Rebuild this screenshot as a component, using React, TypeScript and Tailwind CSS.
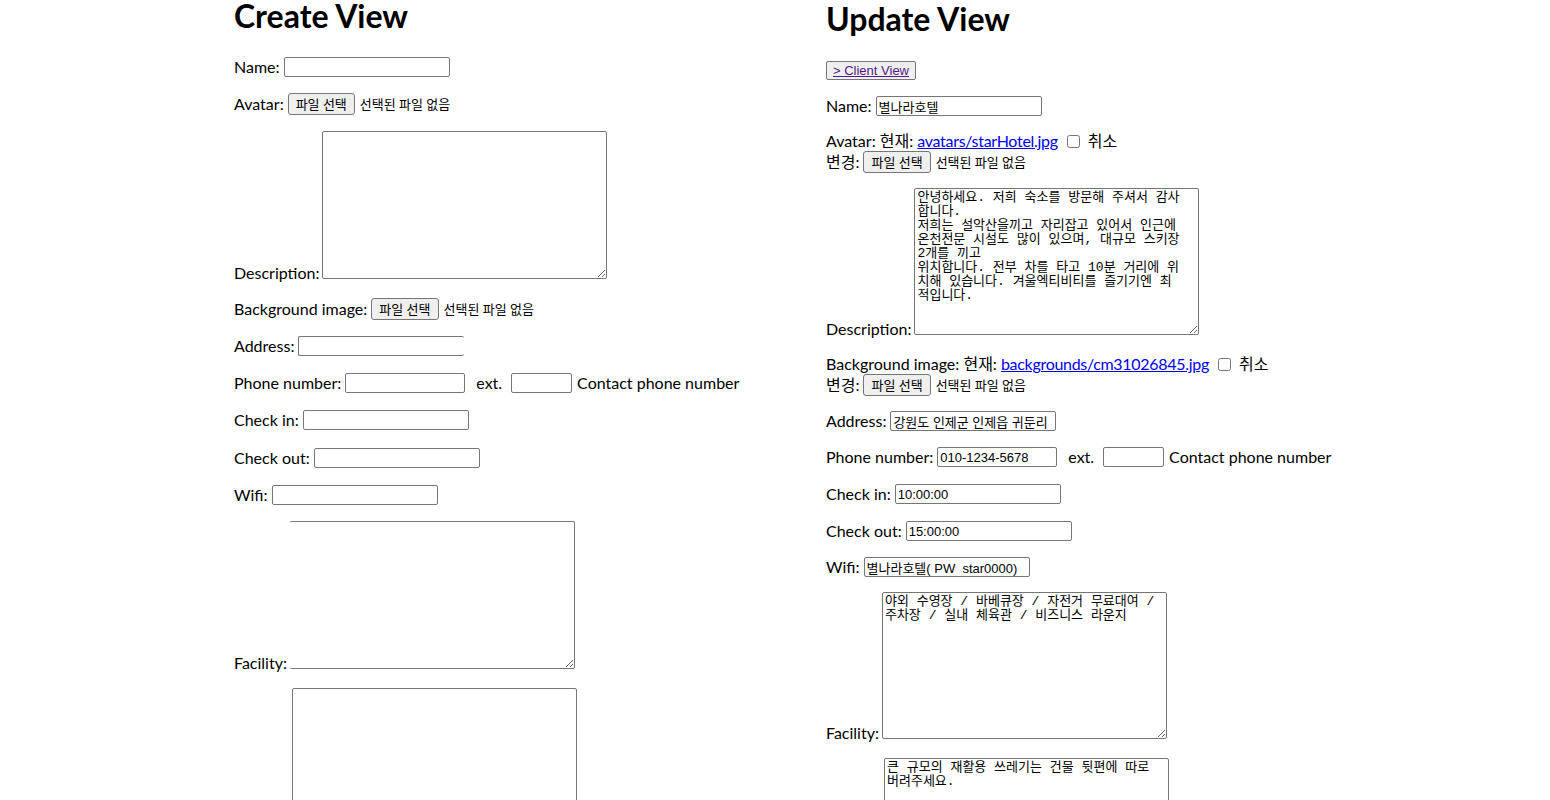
import React from 'react';

const label = "text-[16px] leading-[20px] text-black";
const field =
  "h-[20px] border border-[#767676] rounded-[2px] bg-white px-[2px] text-[13px] leading-[16px] text-black font-['Liberation_Sans','Noto_Sans_CJK_KR',sans-serif] outline-none";
const area =
  "w-[285px] border border-[#767676] rounded-[2px] bg-white px-[2px] py-[2px] text-[13px] leading-[14px] text-black font-['Liberation_Mono','Noto_Sans_CJK_KR',monospace] resize-y outline-none whitespace-pre overflow-hidden";

function FileBtn() {
  return (
    <span className="inline-flex items-center gap-[5px]">
      <button className="h-[22px] px-[7px] border border-[#767676] rounded-[3px] bg-[#efefef] text-[13px] leading-[16px] text-black">
        파일 선택
      </button>
      <span className="text-[13px] leading-[16px] text-black">선택된 파일 없음</span>
    </span>
  );
}

function Field({ name, w = 'w-[166px]', value = '', extra = '', inputExtra = '' }: { name: string; w?: string; value?: string; extra?: string; inputExtra?: string }) {
  return (
    <div className={`flex items-center gap-[4px] ${extra}`}>
      <span className={label}>{name}:</span>
      <input className={`${field} ${w} ${inputExtra}`} defaultValue={value} />
    </div>
  );
}

function Phone({ value = '', extra = '' }: { value?: string; extra?: string }) {
  return (
    <div className={`flex items-center ${extra}`}>
      <span className={label}>Phone number:</span>
      <input className={`${field} w-[120px] ml-[4px]`} defaultValue={value} />
      <span className={`${label} ml-[11px]`}>ext.</span>
      <input className={`${field} w-[61px] ml-[9px]`} />
      <span className={`${label} ml-[5px]`}>Contact phone number</span>
    </div>
  );
}

function AreaRow({ name, h, value = '', extra = '', areaExtra = '' }: { name: string; h: string; value?: string; extra?: string; areaExtra?: string }) {
  return (
    <div className={`flex items-end gap-[3px] ${extra}`}>
      {name ? <span className={`${label} mb-[-4px]`}>{name}:</span> : null}
      <textarea className={`${area} ${h} ${areaExtra}`} defaultValue={value} wrap="off" />
    </div>
  );
}

const desc = `안녕하세요. 저희 숙소를 방문해 주셔서 감사
합니다.
저희는 설악산을끼고 자리잡고 있어서 인근에
온천전문 시설도 많이 있으며, 대규모 스키장
2개를 끼고
위치합니다. 전부 차를 타고 10분 거리에 위
치해 있습니다. 겨울엑티비티를 즐기기엔 최
적입니다.`;

const facility = `야외 수영장 / 바베큐장 / 자전거 무료대여 /
주차장 / 실내 체육관 / 비즈니스 라운지`;

const notice = `큰 규모의 재활용 쓰레기는 건물 뒷편에 따로
버려주세요.`;

function CreateView() {
  return (
    <div className="w-[592px] flex flex-col">
      <h1 className="text-[32px] leading-[37px] font-bold mt-[-3px]">Create View</h1>
      <Field name="Name" extra="mt-[23px]" />
      <div className="flex items-center gap-[4px] mt-[16px]">
        <span className={label}>Avatar:</span>
        <FileBtn />
      </div>
      <AreaRow name="Description" h="h-[148px]" extra="mt-[16px]" />
      <div className="flex items-center gap-[4px] mt-[19px]">
        <span className={label}>Background image:</span>
        <FileBtn />
      </div>
      <Field name="Address" extra="mt-[16px]" inputExtra="border-r-0" />
      <Phone extra="mt-[17px]" />
      <Field name="Check in" extra="mt-[17px]" />
      <Field name="Check out" extra="mt-[18px]" />
      <Field name="Wifi" extra="mt-[17px]" />
      <AreaRow name="Facility" h="h-[148px]" extra="mt-[16px]" areaExtra="border-l-0" />
      <div className="mt-[19px] pl-[58px]">
        <textarea className={`${area} h-[148px]`} wrap="off" />
      </div>
    </div>
  );
}

function UpdateView() {
  return (
    <div className="flex flex-col">
      <h1 className="text-[32px] leading-[37px] font-bold mt-[0px]">Update View</h1>
      <div className="flex mt-[24px]">
        <button className="h-[19px] px-[6px] border border-[#767676] rounded-[2px] bg-[#efefef] text-[13px] leading-[15px] font-['Liberation_Sans',sans-serif]">
          <span className="text-[#551A8B] underline">&gt; Client View</span>
        </button>
      </div>
      <Field name="Name" value="별나라호텔" extra="mt-[16px]" />
      <div className="flex flex-col mt-[15px]">
        <div className="flex items-center h-[20px]">
          <span className={label}>Avatar: 현재:&nbsp;</span>
          <a href="#" className="text-[16px] leading-[20px] text-[#0000EE] underline tracking-[-0.3px]">avatars/starHotel.jpg</a>
          <input type="checkbox" className="w-[13px] h-[13px] ml-[9px]" />
          <span className={`${label} ml-[8px]`}>취소</span>
        </div>
        <div className="flex items-center gap-[4px] h-[22px]">
          <span className={label}>변경:</span>
          <FileBtn />
        </div>
      </div>
      <AreaRow name="Description" h="h-[147px]" value={desc} extra="mt-[15px]" />
      <div className="flex flex-col mt-[19px]">
        <div className="flex items-center h-[20px]">
          <span className={label}>Background image: 현재:&nbsp;</span>
          <a href="#" className="text-[16px] leading-[20px] text-[#0000EE] underline tracking-[-0.3px]">backgrounds/cm31026845.jpg</a>
          <input type="checkbox" className="w-[13px] h-[13px] ml-[9px]" />
          <span className={`${label} ml-[8px]`}>취소</span>
        </div>
        <div className="flex items-center gap-[4px] h-[22px]">
          <span className={label}>변경:</span>
          <FileBtn />
        </div>
      </div>
      <Field name="Address" value="강원도 인제군 인제읍 귀둔리" extra="mt-[15px]" />
      <Phone value="010-1234-5678" extra="mt-[16px]" />
      <Field name="Check in" value="10:00:00" extra="mt-[17px]" />
      <Field name="Check out" value="15:00:00" extra="mt-[17px]" />
      <Field name="Wifi" value="별나라호텔( PW  star0000)" extra="mt-[16px]" />
      <AreaRow name="Facility" h="h-[147px]" value={facility} extra="mt-[15px]" />
      <div className="mt-[19px] pl-[58px]">
        <textarea className={`${area} h-[148px]`} defaultValue={notice} wrap="off" />
      </div>
    </div>
  );
}

export default function App() {
  return (
    <div className="h-[800px] overflow-hidden bg-white font-['Lato','Noto_Sans_CJK_KR',sans-serif] text-black">
      <div className="flex pl-[234px]">
        <CreateView />
        <UpdateView />
      </div>
    </div>
  );
}
